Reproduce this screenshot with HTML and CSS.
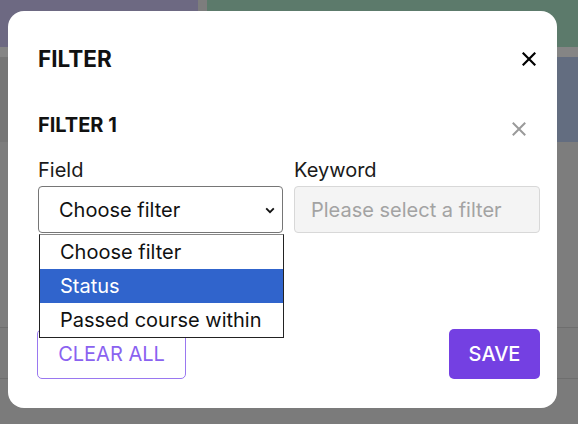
FILE: index.html
```html
<!DOCTYPE html>
<html>
<head>
<meta charset="utf-8">
<link rel="stylesheet" href="styles.css">
</head>
<body>
<div class="page">
  <div class="topbar">
    <div class="tb-left"></div>
    <div class="tb-gap"></div>
    <div class="tb-right"></div>
  </div>
  <div class="band"></div>
  <div class="hero">
    <div class="hero-left"></div>
    <div class="hero-right"></div>
  </div>
  <div class="content"></div>
  <div class="row"></div>
  <div class="row"></div>
</div>

<div class="modal">
  <div class="modal-head">
    <h1 class="title">FILTER</h1>
    <button class="close">
      <svg width="14" height="14" viewBox="0 0 14 14"><path d="M1.5 1.5 L12.5 12.5 M12.5 1.5 L1.5 12.5" stroke="#000" stroke-width="2.2" stroke-linecap="square"/></svg>
    </button>
  </div>

  <div class="section">
    <div class="section-head">
      <h2 class="subtitle">FILTER 1</h2>
      <button class="remove">
        <svg width="14" height="14" viewBox="0 0 14 14"><path d="M1.5 1.5 L12.5 12.5 M12.5 1.5 L1.5 12.5" stroke="#9a9a9a" stroke-width="2" stroke-linecap="square"/></svg>
      </button>
    </div>
    <div class="fields">
      <div class="field">
        <label class="label">Field</label>
        <div class="select">
          <span>Choose filter</span>
          <svg class="chev" width="10" height="7" viewBox="0 0 10 7"><path d="M1.2 1.3 L5 5.2 L8.8 1.3" fill="none" stroke="#111" stroke-width="1.8"/></svg>
        </div>
        <ul class="options">
          <li>Choose filter</li>
          <li class="active">Status</li>
          <li>Passed course within</li>
        </ul>
      </div>
      <div class="field">
        <label class="label">Keyword</label>
        <div class="input">Please select a filter</div>
      </div>
    </div>
  </div>

  <div class="footer">
    <button class="btn-outline">CLEAR ALL</button>
    <button class="btn-primary">SAVE</button>
  </div>
</div>
</body>
</html>
```

FILE: styles.css
```css
* { box-sizing: border-box; }
html, body { margin: 0; padding: 0; }
body {
  width: 578px;
  height: 424px;
  overflow: hidden;
  background: #7b7b7b;
  font-family: Inter, "Noto Sans", sans-serif;
  position: relative;
}

.page { display: flex; flex-direction: column; }
.topbar { display: flex; height: 47px; }
.tb-left { width: 198px; background: #6d6982; }
.tb-gap { width: 9px; background: #7d7d7d; }
.tb-right { flex: 1; background: #5c7a6b; }
.band { height: 10px; background: #858585; }
.hero { display: flex; height: 85px; }
.hero-left { flex: 1; background: #767676; }
.hero-right { width: 30px; background: #636d80; }
.content { height: 185px; background: #7d7d7d; }
.row { height: 51px; border-top: 1px solid #6e6e6e; background: #7b7b7b; }

.modal {
  position: absolute;
  left: 8px;
  top: 11px;
  width: 549px;
  height: 397px;
  background: #fff;
  border-radius: 16px;
  padding: 34px 17px 29px 30px;
  display: flex;
  flex-direction: column;
}

.modal-head {
  display: flex;
  justify-content: space-between;
  align-items: center;
  height: 28px;
}
.title {
  margin: 0;
  font-size: 22.5px;
  line-height: 28px;
  font-weight: 700;
  color: #111;
}
button { font-family: inherit; }
.close, .remove {
  border: 0;
  background: none;
  padding: 0;
  width: 14px;
  height: 14px;
  display: flex;
}
.close { margin-right: 4px; }

.section { margin-top: 41px; }
.section-head {
  display: flex;
  justify-content: space-between;
  align-items: center;
  height: 22px;
}
.subtitle {
  margin: 0;
  font-size: 20px;
  line-height: 22px;
  font-weight: 700;
  color: #111;
}
.remove { margin-right: 14px; margin-top: 7px; }

.fields {
  margin-top: 23px;
  display: grid;
  grid-template-columns: 245px 246px;
  column-gap: 11px;
}
.field { position: relative; display: flex; flex-direction: column; }
.label {
  font-size: 20px;
  line-height: 23px;
  color: #1a1a1a;
  margin-bottom: 4px;
}
.select {
  height: 47px;
  border: 1px solid #767676;
  border-radius: 4px;
  display: flex;
  align-items: center;
  justify-content: space-between;
  padding: 0 7px 0 20px;
  font-size: 20px;
  color: #111;
}
.chev { margin-top: 1px; }
.input {
  height: 47px;
  border: 1px solid #d8d8d8;
  border-radius: 4px;
  background: #f4f4f4;
  display: flex;
  align-items: center;
  padding: 0 16px;
  font-size: 20px;
  color: #a3a3a3;
}
.options {
  position: absolute;
  top: 75px;
  left: 1px;
  width: 245px;
  margin: 0;
  padding: 0;
  list-style: none;
  background: #fff;
  border: 1px solid #222;
  border-top-color: #888;
  z-index: 2;
}
.options li {
  height: 34px;
  line-height: 34px;
  padding-left: 20px;
  font-size: 20px;
  color: #111;
}
.options li.active { background: #3064cc; color: #fff; }

.footer {
  margin-top: auto;
  display: flex;
  justify-content: space-between;
  align-items: flex-end;
}
.btn-outline {
  width: 149px;
  height: 50px;
  margin-left: -1px;
  border: 1px solid #9a78f0;
  border-radius: 5px;
  background: #fff;
  color: #8a62f0;
  font-size: 20px;
}
.btn-primary {
  width: 91px;
  height: 50px;
  border: 0;
  border-radius: 5px;
  background: #7440e2;
  color: #fff;
  font-size: 20px;
  font-weight: 500;
}
```
